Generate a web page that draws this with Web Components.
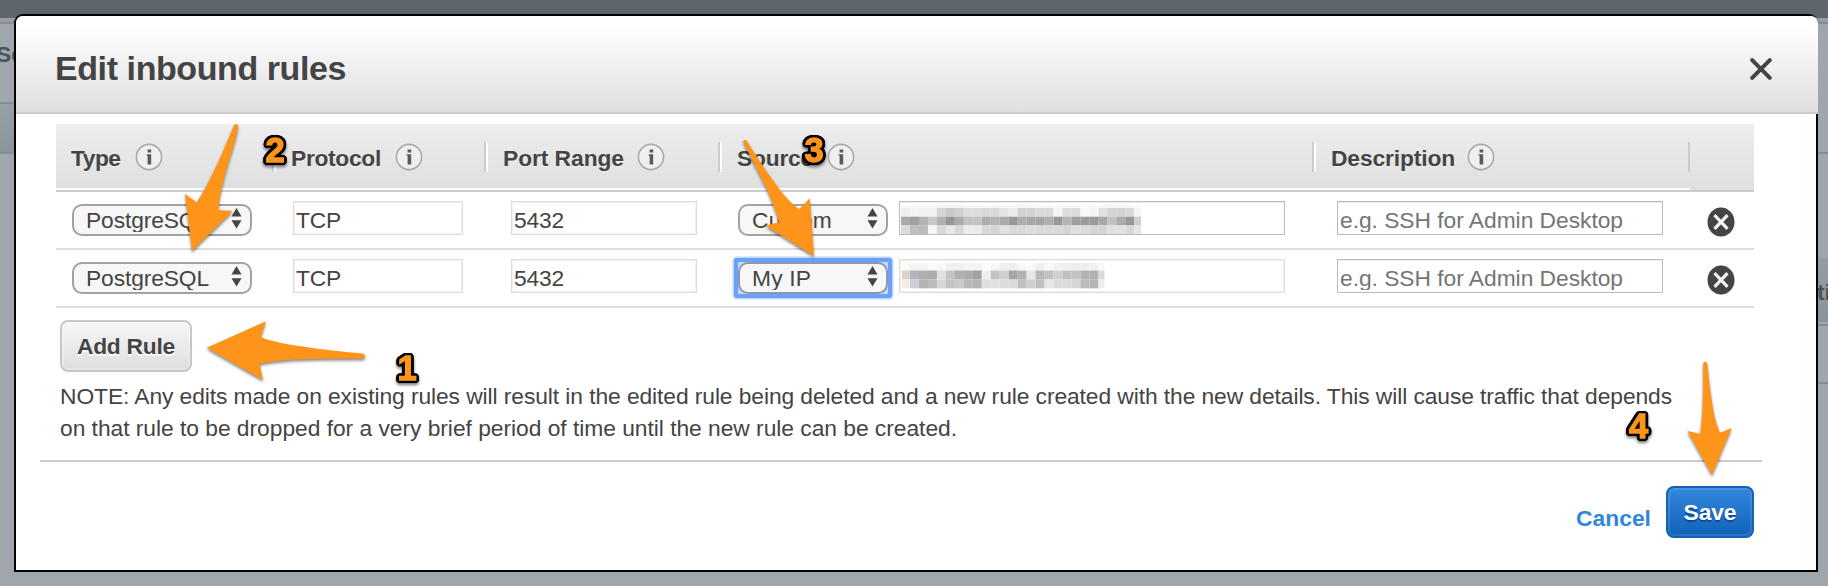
<!DOCTYPE html>
<html lang="en">
<head>
<meta charset="utf-8">
<title>Edit inbound rules</title>
<style>
html,body{margin:0;padding:0}
body{width:1828px;height:586px;overflow:hidden;font-family:"Liberation Sans",Arial,sans-serif;font-size:22.8px;color:#444;background:#9fa6ad}
</style>
</head>
<body>
<app-page></app-page>
<script>
const define=(name,html,setup)=>customElements.define(name,class extends HTMLElement{
  connectedCallback(){
    if(this.shadowRoot)return;
    this.attachShadow({mode:'open'}).innerHTML=typeof html==='function'?html(this):html;
    if(setup)setup(this,this.shadowRoot);
  }
});

/* Text that is tracked to fill an exact advance width */
define('fit-text','<style>:host{display:inline-block;white-space:nowrap}</style><span><slot></slot></span>',(el,root)=>{
  const span=root.querySelector('span'),want=+el.getAttribute('w');
  if(!want)return;
  const n=el.textContent.length,w=span.getBoundingClientRect().width;
  span.style.letterSpacing=((want-w)/n)+'px';
  el.style.width=want+'px';
});

define('info-icon',`<style>:host{display:block;width:28px;height:28px;flex:none}svg{display:block}</style>
<svg width="28" height="28" viewBox="0 0 28 28"><circle cx="14" cy="14" r="12.6" fill="#efefef" stroke="#aaa" stroke-width="1.6"/>
<path d="M12.6 6.6h3.6v2.8h-3.6zM11.8 11.2h4.4v10.2h-3.6v-8.6h-.8z" fill="#5a5a5a"/></svg>`);

define('remove-icon',`<style>:host{display:block;width:28px;height:30px}svg{display:block}</style>
<svg width="28" height="30" viewBox="0 0 28 30"><ellipse cx="14" cy="15" rx="13.5" ry="14.5" fill="#444"/>
<path d="M8.6 9.3L19.4 20.7M19.4 9.3L8.6 20.7" stroke="#f4f4f4" stroke-width="3.2" stroke-linecap="square" fill="none"/></svg>`);

define('close-icon',`<style>:host{display:block;width:22px;height:22px}svg{display:block}</style>
<svg width="22" height="22" viewBox="0 0 22 22"><path d="M2.2 2.2L19.8 19.8M19.8 2.2L2.2 19.8" stroke="#444" stroke-width="4" stroke-linecap="round"/></svg>`);

define('select-box',el=>`<style>
:host{display:block;position:relative;box-sizing:border-box;height:32px;border:2px solid #a2a2a2;border-radius:10px;background:#f7f7f7}
.t{height:26px;line-height:28px;overflow:hidden;padding-left:12px}
svg{position:absolute;right:8px;top:2px}
.ring{display:none;position:absolute;left:-6px;top:-6px;right:-6px;bottom:-6px;border:4px solid #6ba2f8;border-radius:3px;box-shadow:0 0 0 1.5px #bdd6fc;background:#c6dbfc}
.fill{display:none;position:absolute;inset:-2px;border:2px solid #8e98a8;border-radius:10px;background:#f7f7f7}
:host([focused]) .ring,:host([focused]) .fill{display:block}
:host([focused]) .t{position:relative}
</style><div class="ring"></div><div class="fill"></div><div class="t"><slot></slot></div>
<svg width="11" height="22" viewBox="0 0 11 22"><path d="M5.5 0l5 8.6h-10zM5.5 20.5l5-8.2h-10z" fill="#444"/></svg>`);

define('text-field',`<style>
:host{display:block;box-sizing:border-box;height:34px;border:1px solid #ddd;box-shadow:inset 0 0 0 1px #f0f0f0;background:#fff}
:host([editable]){border-color:#bbb;box-shadow:inset 0 1px 0 #eee}
:host([placeholder]){color:#757575}
.t{height:30px;line-height:36px;overflow:hidden;padding-left:2px}
:host([redacted]) .t{padding:0;height:32px;line-height:0}
</style><div class="t"><slot></slot></div>`);

/* Redacted value: a strip of grey blocks, one list of shades per row */
const strips={
 group:{x:1,first:9,last:6.7,rows:[[3,3,'f8 fb fa fb f6 f4 f5 f8 f8 f7 f7 f8 f9 f6 f6 f7 f7 fb f8 f8 fc fb f8 f6 f6 f7 fb'],[6,8.7,'ee f4 f2 f2 d4 c9 d0 dd dd d9 d9 e4 ec d2 d2 d9 d9 f4 dc dc f9 f6 e0 d3 d3 d9 f5'],[14.7,8.7,'aa a1 b3 c8 b0 96 ac c2 c3 ae b4 a9 98 ad a6 a6 ae 98 b4 a0 9a 9a a8 c2 ac 98 ce'],[23.4,8.6,'dc bf bb f5 d8 e8 d8 ec eb d9 d5 e1 d9 d9 dd d9 d9 d9 d5 e0 da d5 d5 e0 e0 d8 e5']]},
 address:{x:2,first:8,last:6,rows:[[3,7.5,'fdfbf2 f4f4f8 f4 fb f7 f0 f0 f3 f3 fb f7 ee ee f8 f9 f0 f8 f1 ee ee ee f0 f8'],[10.5,9,'d8d4ce b4b5bc b0 ac e0 c4 b0 ac a2 ee c4 d0 a6 b2 e8 b8 c2 d0 c0 c4 b2 b2 da'],[19.5,8.8,'f3ede6 cdcfd6 b4 bc d6 c2 ca b8 b4 e0 e0 dc da c0 d0 c0 e6 da da d6 bc b4 ec']]}
};
define('redacted-strip',el=>{
  const s=strips[el.getAttribute('kind')];
  let r='';
  for(const [y,h,list] of s.rows){let x=s.x;list.split(' ').forEach((c,i,a)=>{
    const w=i===0?s.first:i===a.length-1?s.last:8.97;
    r+=`<rect x="${x}" y="${y}" width="${w+.05}" height="${h+.05}" fill="#${c.length===2?c+c+c:c}"/>`;x+=w;});}
  return `<style>:host{display:block}svg{display:block}</style><svg width="260" height="32">${r}</svg>`;
});

const cols='218px 212px 234px 594px 376px 64px';
define('head-cell',el=>`<style>
:host{display:flex;box-sizing:border-box;height:66px;padding:0 0 0 17px;border-bottom:2px solid #fff;position:relative;font-weight:bold;line-height:64px;text-shadow:0 1px 0 #fff8}
:host([first]){padding-left:15px}
.l{padding-top:2px;height:62px}
info-icon{margin:19px 0 0 ${el.getAttribute('gap')||15}px}
:host::before,:host::after{content:"";position:absolute;top:18px;height:30px;width:2px}
:host::before{left:0;background:#fff}:host::after{right:0;background:#ccc}
:host([first])::before{display:none}
</style><div class="l"><slot></slot></div><info-icon></info-icon>`);

define('rules-head',`<style>:host{display:grid;grid-template-columns:${cols};height:66px;border-bottom:2px solid #ccc;background:linear-gradient(#ededed,#dfdfdf)}</style>
<head-cell first gap="14"><fit-text w="49.5">Type</fit-text></head-cell>
<head-cell gap="14"><fit-text w="90">Protocol</fit-text></head-cell>
<head-cell gap="13"><fit-text w="121">Port Range</fit-text></head-cell>
<head-cell gap="14"><fit-text w="76">Source</fit-text></head-cell>
<head-cell gap="12"><fit-text w="124">Description</fit-text></head-cell>`);

define('rule-row',`<style>
:host{display:grid;grid-template-columns:${cols};height:56px;border-bottom:2px solid #ddd;align-items:start}
.c{padding-top:9px}.s{padding-top:12px}
.type{padding-left:16px;width:180px}.proto{padding-left:19px;width:170px}.port{padding-left:25px;width:186px}
.src{display:grid;grid-template-columns:150px 386px;column-gap:11px;padding-left:18px}
.desc{padding-left:23px;width:326px}
remove-icon{margin:15px 0 0 17px}
</style>
<div class="s type"><slot name="type"></slot></div><div class="c proto"><slot name="protocol"></slot></div><div class="c port"><slot name="port"></slot></div>
<div class="src"><div class="s"><slot name="source"></slot></div><div class="c"><slot name="value"></slot></div></div>
<div class="c desc"><slot name="description"></slot></div><remove-icon></remove-icon>`);

define('action-button',`<style>
:host{display:block;box-sizing:border-box;height:52px;line-height:49px;border:2px solid #c8c8c8;border-radius:8px;font-weight:bold;text-align:center;background:linear-gradient(#f7f7f7,#dedede);box-shadow:inset 0 0 0 2px #ffffff38;text-shadow:0 2px 0 #fff}
:host([primary]){border-color:#1263b8;background:linear-gradient(#3387dd,#1162b9);color:#fff;text-shadow:0 2px 1px #0c4a91;line-height:49px;box-shadow:inset 0 0 0 2px #ffffff1c}
</style><slot></slot>`);

/* Step number: heavy orange digit with a round black outline */
const outline=Array.from({length:24},(_,i)=>{
  const a=i*Math.PI/12;return `${(3.4*Math.cos(a)).toFixed(2)}px ${(3.4*Math.sin(a)).toFixed(2)}px 0 #000`;
}).join(',');
define('step-number',`<style>
:host{display:block;position:absolute;width:30px;height:40px;text-align:center;font:bold 34.5px/40px "Liberation Sans",Arial,sans-serif;color:#ff941b;-webkit-text-stroke:1.3px #ff941b;text-shadow:${outline};filter:drop-shadow(0 2px 1.5px #0008)}
</style><slot></slot>`);

define('callout-layer',`<style>
:host{position:absolute;left:0;top:0;width:1828px;height:586px;pointer-events:none}
svg{display:block}
.a{fill:#ff941b;filter:drop-shadow(0 2px 1.5px #0007)}
</style><svg width="1828" height="586">
<g class="a">
<path d="M234 125.3Q236 122.5 238.2 125.5Q237.5 134 231 154Q220 189 218.3 210L232.7 211L192 251L185 194L196.7 202.3Q212 180 234 125.3Z"/>
<path d="M206.7 347.7L266 321.3L260.7 337.3Q275 343 309 347.5Q333 351 363 353.5Q367 356 363.5 358.5L322 358.8Q280 359 259.5 364L263 380Z"/>
<path d="M743 141.5Q744 138.5 746.5 140.5Q762 166 780 190Q790 203 799.3 209.3L809.7 198.3L814 256L765.7 225.7L779 222.3Q774 203 760 175Q751 158 743 141.5Z"/>
<path d="M1703.2 363Q1705 360.3 1707.2 363Q1709 385 1713 409Q1716 425 1720 432.7L1731.7 428L1712 475L1687.3 431L1700 433.7Q1703.5 416 1703.2 363Z"/>
</g>
</svg>
<step-number style="left:392px;top:347.5px">1</step-number><step-number style="left:260px;top:129.5px">2</step-number>
<step-number style="left:799px;top:129.5px">3</step-number><step-number style="left:1623.5px;top:406px">4</step-number>`);

define('page-backdrop',`<style>
:host{position:absolute;left:0;top:0;width:1828px;height:586px;overflow:hidden;display:grid;grid-template-columns:14px 1fr 10px;grid-template-rows:18px 1fr;font-weight:bold;color:#4a525a}
.top{grid-column:1/4;background:#5e656c}
.l,.r{overflow:hidden}.r{grid-column:3}
.line{height:2px;background:#858c94}
.s{height:78px;line-height:60px}
</style><div class="top"></div>
<div class="l"><div style="height:4px;background:#969da4"></div><div class="line"></div><div class="s"><span style="margin-left:-4px">Se</span></div><div class="line"></div>
<div style="height:48px;background:linear-gradient(#98a0a7,#8c949b)"></div><div class="line"></div></div>
<div class="r"><div style="height:4px;background:#969da4"></div><div class="line"></div><div style="height:128px"></div><div class="line"></div><div style="height:104px"></div>
<div style="height:64px;line-height:69px;background:linear-gradient(#959ca4,#8b939a)"><span style="margin-left:-1px">ti</span></div><div style="height:2px"></div><div class="line"></div><div style="height:56px"></div><div class="line"></div></div>`);

define('rules-dialog',`<style>
:host{display:block;position:relative;box-sizing:border-box;width:1804px;height:558px;border:2px solid #000;border-radius:9px 9px 0 0;background:#fff}
header{display:flex;justify-content:space-between;box-sizing:border-box;width:1802px;height:98px;border-bottom:2px solid #ccc;border-radius:7px 7px 0 0;padding:0 46px 0 39px;background:linear-gradient(#fff 10%,#dfdfdf)}
h1{margin:0;padding-top:9px;font-size:34px;height:80px;white-space:nowrap;line-height:86px}
header close-icon{margin-top:42px}
main{padding:10px 62px 0 40px}
.add{width:132px;margin:12px 0 0 4px}
.note{margin:8px 0 0 4px;line-height:32px}
.note fit-text{display:block}
hr{margin:16px -8px 0 -16px;border:0;height:2px;background:#ccc}
footer{display:flex;justify-content:flex-end;padding-top:24px;gap:15px}
.cancel{color:#3087de;font-weight:bold;line-height:64px}
.save{width:88px}
</style>
<header><h1><fit-text w="291">Edit inbound rules</fit-text></h1><close-icon></close-icon></header>
<main><rules-head></rules-head>
<rule-row>
<select-box slot="type"><fit-text w="123">PostgreSQL</fit-text></select-box>
<text-field slot="protocol"><fit-text w="45">TCP</fit-text></text-field><text-field slot="port"><fit-text w="50">5432</fit-text></text-field>
<select-box slot="source"><fit-text w="80">Custom</fit-text></select-box>
<text-field slot="value" editable redacted><redacted-strip kind="group"></redacted-strip></text-field>
<text-field slot="description" editable placeholder><fit-text w="283">e.g. SSH for Admin Desktop</fit-text></text-field>
</rule-row>
<rule-row>
<select-box slot="type"><fit-text w="123">PostgreSQL</fit-text></select-box>
<text-field slot="protocol"><fit-text w="45">TCP</fit-text></text-field><text-field slot="port"><fit-text w="50">5432</fit-text></text-field>
<select-box slot="source" focused><fit-text w="59">My IP</fit-text></select-box>
<text-field slot="value" redacted><redacted-strip kind="address"></redacted-strip></text-field>
<text-field slot="description" editable placeholder><fit-text w="283">e.g. SSH for Admin Desktop</fit-text></text-field>
</rule-row>
<action-button class="add"><fit-text w="98">Add Rule</fit-text></action-button>
<div class="note"><fit-text w="1612">NOTE: Any edits made on existing rules will result in the edited rule being deleted and a new rule created with the new details. This will cause traffic that depends</fit-text>
<fit-text w="897">on that rule to be dropped for a very brief period of time until the new rule can be created.</fit-text></div>
<hr>
<footer><fit-text class="cancel" w="75">Cancel</fit-text><action-button class="save" primary><fit-text w="53">Save</fit-text></action-button></footer>
</main>`);

define('app-page',`<style>:host{display:block;position:relative;box-sizing:border-box;width:1828px;height:586px;padding:14px 0 0 14px}</style>
<page-backdrop></page-backdrop><rules-dialog></rules-dialog><callout-layer></callout-layer>`);
</script>
</body>
</html>
